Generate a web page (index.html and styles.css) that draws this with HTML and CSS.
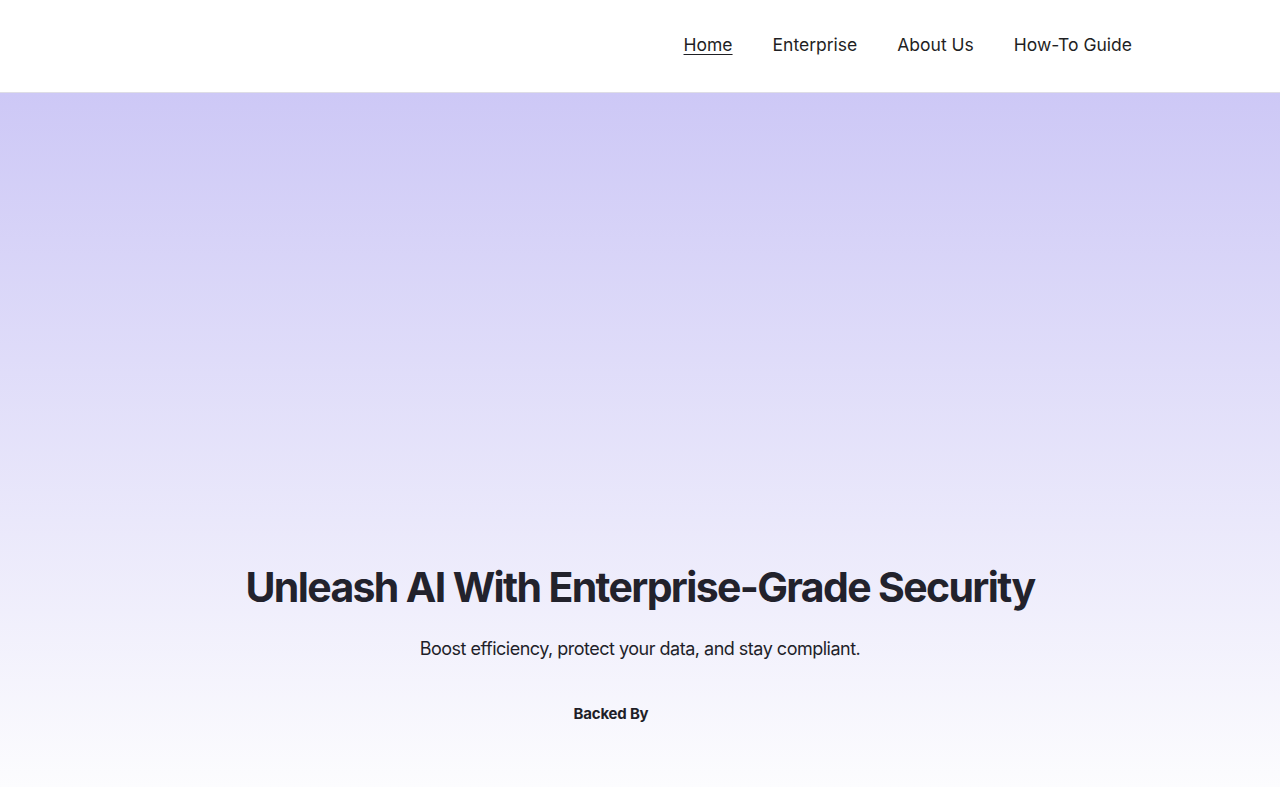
FILE: index.html
```html
<!DOCTYPE html>
<html lang="en">
<head>
<meta charset="utf-8">
<title>Unleash AI</title>
<link rel="stylesheet" href="styles.css">
</head>
<body>
<header class="site-header">
  <nav class="main-nav">
    <a class="nav-link active" href="#">Home</a>
    <a class="nav-link" href="#">Enterprise</a>
    <a class="nav-link" href="#">About Us</a>
    <a class="nav-link" href="#">How-To Guide</a>
  </nav>
</header>
<section class="hero">
  <div class="hero-content">
    <h1 class="hero-title">Unleash AI With Enterprise-Grade Security</h1>
    <p class="hero-sub">Boost efficiency, protect your data, and stay compliant.</p>
    <div class="backed">
      <span class="backed-label">Backed By</span>
    </div>
  </div>
</section>
</body>
</html>
```
FILE: styles.css
```css
* { box-sizing: border-box; }
html, body { margin: 0; padding: 0; background: #fff; }
body {
  font-family: Inter, "Noto Sans", sans-serif;
  color: #1f1f28;
}
.site-header {
  height: 93px;
  border-bottom: 1px solid #dedde6;
  background: #fff;
  display: flex;
  align-items: center;
  justify-content: flex-end;
  padding-right: 148px;
}
.main-nav {
  display: flex;
  gap: 40px;
  align-items: center;
  margin-top: -4px;
}
.nav-link {
  font-size: 17.5px;
  color: #1f1f24;
  text-decoration: none;
}
.nav-link.active { text-decoration: underline; text-decoration-thickness: 1px; text-underline-offset: 3px; }
.hero {
  height: 694px;
  background: linear-gradient(to bottom, #cdc8f6 0%, #fcfcfe 100%);
  display: flex;
  flex-direction: column;
  justify-content: flex-end;
}
.hero-content {
  display: flex;
  flex-direction: column;
  align-items: center;
  padding-bottom: 64px;
}
.hero-title {
  margin: 0;
  font-size: 41px;
  font-weight: 700;
  color: #22222c;
  letter-spacing: -1.65px;
  line-height: 50px;
}
.hero-sub {
  margin: 25px 0 0;
  font-size: 18px;
  color: #1f1f2a;
  letter-spacing: -0.5px;
  line-height: 24px;
}
.backed {
  margin-top: 42px;
  margin-right: 58px;
}
.backed-label {
  font-size: 15px;
  font-weight: 700;
  letter-spacing: -0.2px;
  color: #1f1f28;
}
```
